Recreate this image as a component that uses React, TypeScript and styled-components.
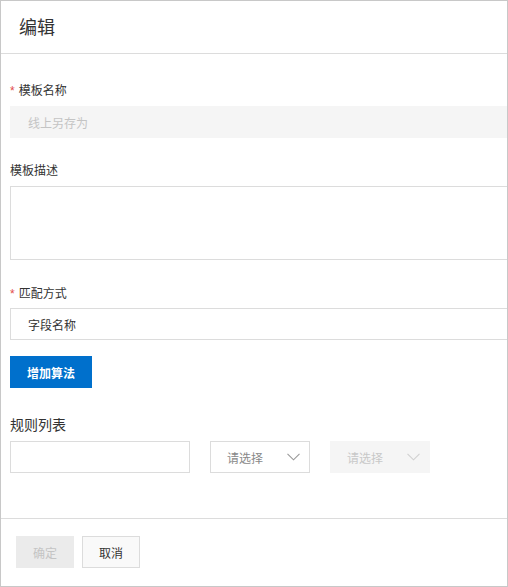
import React from "react";
import styled, { createGlobalStyle } from "styled-components";

const Global = createGlobalStyle`
  html, body { margin: 0; padding: 0; background: #fff; }
  body {
    font-family: "Noto Sans CJK SC", "Noto Sans", "Liberation Sans", sans-serif;
    color: #333;
  }
  * { box-sizing: border-box; }
`;

const Panel = styled.div`
  width: 508px;
  height: 587px;
  border: 1px solid #c8c8c8;
  overflow: hidden;
  display: flex;
  flex-direction: column;
  background: #fff;
`;

const Header = styled.div`
  height: 53px;
  flex: none;
  border-bottom: 1px solid #dcdcdc;
  display: flex;
  align-items: center;
  padding: 0 0 2px 18px;
`;

const Title = styled.h2`
  margin: 0;
  font-size: 18px;
  font-weight: 400;
  color: #333;
  line-height: 24px;
`;

const Body = styled.div`
  flex: 1;
  padding: 26px 0 0 9px;
  display: flex;
  flex-direction: column;
`;

const FormItem = styled.div<{ $mb: number }>`
  display: flex;
  flex-direction: column;
  margin-bottom: ${(p) => p.$mb}px;
`;

const Label = styled.label<{ $size?: number; $mb?: number }>`
  font-size: ${(p) => p.$size ?? 12}px;
  line-height: 20px;
  color: #333;
  margin-bottom: ${(p) => p.$mb ?? 6}px;
  display: flex;
  align-items: center;
`;

const Star = styled.span`
  color: #e24b4b;
  margin-right: 4px;
  font-size: 12px;
  font-family: "Liberation Sans", sans-serif;
  position: relative;
  top: 1px;
`;

const Input = styled.div<{ $disabled?: boolean }>`
  width: 540px;
  height: 32px;
  display: flex;
  align-items: center;
  padding-left: 17px;
  font-size: 12px;
  background: ${(p) => (p.$disabled ? "#f5f5f5" : "#fff")};
  border: 1px solid ${(p) => (p.$disabled ? "#f5f5f5" : "#dcdcdc")};
  color: ${(p) => (p.$disabled ? "#c4c4c4" : "#333")};
`;

const TextArea = styled.div`
  width: 540px;
  height: 74px;
  border: 1px solid #dcdcdc;
  background: #fff;
`;

const PrimaryButton = styled.button`
  width: 82px;
  height: 32px;
  border: none;
  background: #0070cc;
  color: #fff;
  font-family: inherit;
  font-size: 12px;
  font-weight: 700;
  padding: 0;
  cursor: pointer;
`;

const RowBox = styled.div`
  display: flex;
  gap: 20px;
`;

const PlainInput = styled.div`
  width: 180px;
  height: 32px;
  border: 1px solid #dcdcdc;
  background: #fff;
`;

const Select = styled.div<{ $disabled?: boolean }>`
  width: 100px;
  height: 32px;
  display: flex;
  align-items: center;
  justify-content: space-between;
  padding: 0 9px 0 16px;
  font-size: 12px;
  background: ${(p) => (p.$disabled ? "#f5f5f5" : "#fff")};
  border: 1px solid ${(p) => (p.$disabled ? "#f5f5f5" : "#dcdcdc")};
  color: ${(p) => (p.$disabled ? "#c8c8c8" : "#888")};
`;

const Chevron = styled.svg<{ $disabled?: boolean }>`
  width: 13px;
  height: 8px;
  flex: none;
  stroke: ${(p) => (p.$disabled ? "#d0d0d0" : "#999")};
`;

const Footer = styled.div`
  flex: none;
  height: 68px;
  border-top: 1px solid #dcdcdc;
  display: flex;
  gap: 8px;
  padding: 17px 0 0 15px;
`;

const FooterButton = styled.button<{ $disabled?: boolean }>`
  width: 58px;
  height: 32px;
  padding: 0;
  font-family: inherit;
  font-size: 12px;
  background: ${(p) => (p.$disabled ? "#ebebeb" : "#f9f9f9")};
  border: 1px solid ${(p) => (p.$disabled ? "#ebebeb" : "#dcdcdc")};
  color: ${(p) => (p.$disabled ? "#c4c4c4" : "#333")};
`;

const ChevronIcon = ({ disabled }: { disabled?: boolean }) => (
  <Chevron $disabled={disabled} viewBox="0 0 13 8" fill="none" strokeWidth="1.1">
    <path d="M0.5 0.8 L6.5 6.8 L12.5 0.8" />
  </Chevron>
);

export default function App() {
  return (
    <>
      <Global />
      <Panel>
        <Header>
          <Title>编辑</Title>
        </Header>
        <Body>
          <FormItem $mb={22}>
            <Label>
              <Star>*</Star>模板名称
            </Label>
            <Input $disabled>线上另存为</Input>
          </FormItem>
          <FormItem $mb={23}>
            <Label>模板描述</Label>
            <TextArea />
          </FormItem>
          <FormItem $mb={16}>
            <Label $mb={5}>
              <Star>*</Star>匹配方式
            </Label>
            <Input>字段名称</Input>
          </FormItem>
          <FormItem $mb={26}>
            <div>
              <PrimaryButton>增加算法</PrimaryButton>
            </div>
          </FormItem>
          <FormItem $mb={0}>
            <Label $size={14} $mb={7}>规则列表</Label>
            <RowBox>
              <PlainInput />
              <Select>
                请选择
                <ChevronIcon />
              </Select>
              <Select $disabled>
                请选择
                <ChevronIcon disabled />
              </Select>
            </RowBox>
          </FormItem>
        </Body>
        <Footer>
          <FooterButton $disabled>确定</FooterButton>
          <FooterButton>取消</FooterButton>
        </Footer>
      </Panel>
    </>
  );
}
